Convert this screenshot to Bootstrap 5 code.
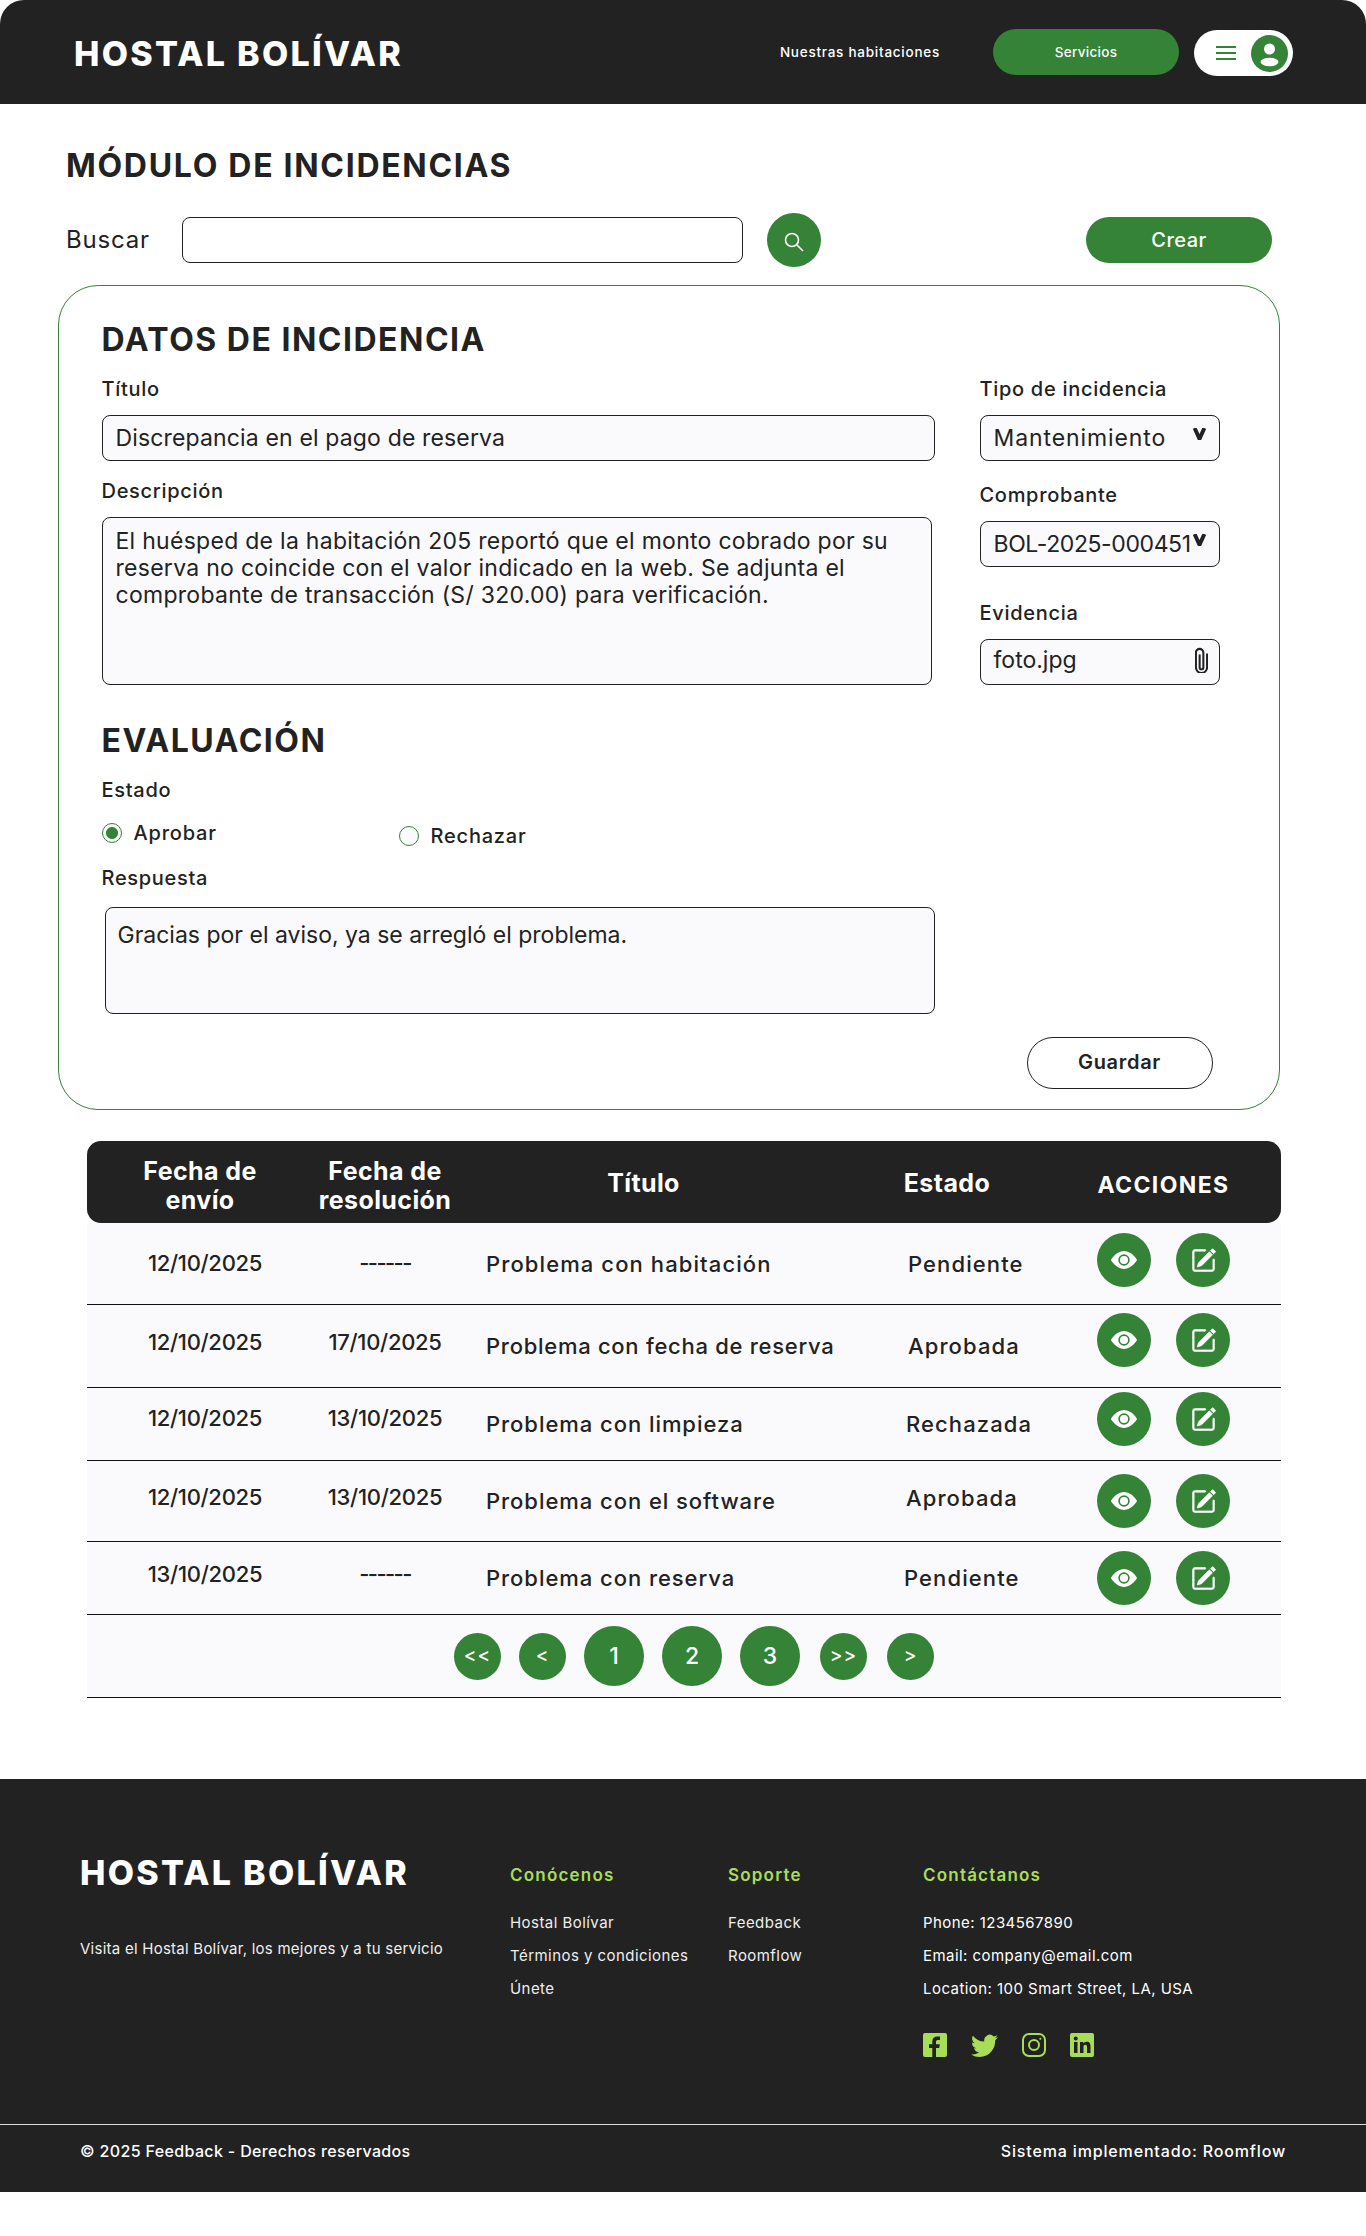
<!DOCTYPE html>
<html lang="es">

<head>
  <meta charset="UTF-8" />
  <meta name="viewport" content="width=device-width, initial-scale=1.0" />
  <title>Módulo de incidencias - Hostal Bolívar</title>
  <link href="https://cdn.jsdelivr.net/npm/bootstrap@5.3.3/dist/css/bootstrap.min.css" rel="stylesheet" />
  <style>
    body {
      font-family: Inter, "Open Sans", sans-serif;
      color: #222;
      background: #fff;
      margin: 0;
    }

    .barra-top {
      height: 104px;
      background: #222;
      border-radius: 24px 24px 0 0;
      padding: 0 73px 0 74px;
      flex-wrap: nowrap;
    }

    .marca {
      font-size: 34px;
      font-weight: 800;
      line-height: 40px;
      color: #fff;
      letter-spacing: 2.3px;
      white-space: nowrap;
    }

    .barra-top .marca {
      margin-top: 4px;
    }

    .enlace-top {
      font-size: 13.5px;
      font-weight: 500;
      letter-spacing: .75px;
      color: #fff;
      text-decoration: none;
      margin-right: 53px;
    }

    .btn-verde {
      background: #348336;
      color: #fff;
      border: 0;
      border-radius: 23px;
      height: 46px;
    }

    .btn-verde:hover {
      background: #2b6f2d;
      color: #fff;
    }

    .btn-servicios {
      width: 186px;
      font-size: 13.5px;
      font-weight: 500;
      letter-spacing: .3px;
      margin-right: 15px;
    }

    .menu-user {
      width: 99px;
      height: 46px;
      background: #fff;
      border-radius: 23px;
      padding: 0 5px 0 22px;
      margin-top: 2px;
    }

    .zona-principal {
      padding: 44px 85px 0 58px;
    }

    .titulo-modulo {
      font-size: 32px;
      font-weight: 700;
      line-height: 36px;
      margin: 0 0 0 8px;
      letter-spacing: 1.7px;
    }

    .fila-buscar {
      margin: 29px 9px 0 8px;
      height: 54px;
    }

    .txt-buscar {
      width: 116px;
      font-size: 24px;
      line-height: 30px;
      letter-spacing: .8px;
    }

    .caja-buscar {
      width: 561px;
      height: 46px;
      border: 1.5px solid #222;
      border-radius: 8px;
    }

    .btn-circulo {
      width: 54px;
      height: 54px;
      padding: 0;
      border-radius: 50%;
      flex: none;
    }

    .btn-buscar {
      margin-left: 24px;
    }

    .btn-crear {
      width: 186px;
      margin-left: auto;
      font-size: 20px;
      font-weight: 500;
      letter-spacing: .5px;
    }

    .panel-datos {
      margin: 18px 0 0;
      width: 1222px;
      height: 825px;
      border: 1.5px solid #348336;
      border-radius: 40px;
      padding: 37px 0 0 42.5px;
    }

    .subtitulo {
      font-size: 32px;
      font-weight: 700;
      line-height: 34px;
      margin: 0;
      letter-spacing: 1.5px;
    }

    .etiqueta {
      display: block;
      font-size: 20px;
      font-weight: 500;
      line-height: 24px;
      letter-spacing: .7px;
      margin: 0 0 14px;
    }

    .col-izq {
      width: 878px;
    }

    .col-der {
      width: 240px;
    }

    .campo {
      height: 46px;
      border: 1.5px solid #222;
      border-radius: 8px;
      background-color: #fafafd;
      font-size: 23px;
      line-height: 27px;
      color: #222;
      padding: 0 0 0 13px;
    }

    .campo:focus {
      border-color: #222;
      box-shadow: none;
      background-color: #fafafd;
    }

    textarea.campo {
      resize: none;
      height: 168px;
      padding: 10px 40px 0 13px;
    }

    .campo-select {
      background-image: url("data:image/svg+xml,%3csvg xmlns='http://www.w3.org/2000/svg' viewBox='0 0 12 11'%3e%3cpath fill='none' stroke='%23222' stroke-width='3.600' d='M1.500 0l4.500 10 4.500-10'/%3e%3c/svg%3e");
      background-repeat: no-repeat;
      background-position: right 13px top 12px;
      background-size: 13px 12px;
      padding-right: 0;
    }

    .sel-tipo { letter-spacing: .9px; }
    .sel-comp { letter-spacing: -.4px; }

    .campo-archivo {
      padding-right: 11px;
      padding-bottom: 4px;
    }

    .evalua {
      margin-top: 39px;
    }

    .fila-radios {
      height: 28px;
      margin: 20px 0 16px;
    }

    .opcion {
      display: flex;
      align-items: center;
      font-size: 20px;
      font-weight: 500;
      line-height: 24px;
      letter-spacing: .8px;
      margin: 0;
      gap: 12px;
    }

    .opcion input {
      appearance: none;
      width: 20px;
      height: 20px;
      margin: 0;
      border: 1.5px solid #348336;
      border-radius: 50%;
      background: #fafafd;
    }

    .opcion input:checked {
      background: radial-gradient(circle, #348336 0 5.5px, #fafafd 6.5px);
    }

    .opcion-a {
      width: 297px;
      margin-top: -6px;
    }

    .resp-box {
      margin-left: 3px;
      width: 830px;
    }

    textarea.campo.resp-box {
      height: 107px;
      padding: 14px 13px 0 12px;
    }

    .btn-guardar {
      display: block;
      width: 186px;
      height: 52px;
      margin: 23px 0 0 925px;
      padding: 0 0 2px;
      background: #fff;
      border: 1.5px solid #222;
      border-radius: 26px;
      color: #222;
      font-size: 20px;
      font-weight: 600;
      letter-spacing: .7px;
    }

    .zona-tabla {
      margin: 31px 0 0 29px;
      width: 1194px;
    }

    .tabla-inc {
      margin: 0;
      table-layout: fixed;
      width: 1194px;
      --bs-table-bg: #fafafd;
      border-collapse: separate;
      border-spacing: 0;
    }

    .tabla-inc th {
      height: 82px;
      background: #222;
      color: #fff;
      font-size: 25px;
      font-weight: 700;
      line-height: 29px;
      letter-spacing: .4px;
      text-align: center;
      vertical-align: middle;
      padding: 3px 0 0;
      border: 0;
      box-shadow: none;
    }

    .tabla-inc th:first-child {
      border-radius: 14px 0 0 14px;
    }

    .tabla-inc th:first-child,
    .tabla-inc th:nth-child(2) {
      padding-top: 8px;
    }

    .tabla-inc th:last-child {
      border-radius: 0 14px 14px 0;
      padding: 6px 18px 0 0;
      font-size: 23px;
      letter-spacing: 1.4px;
    }

    .tabla-inc td {
      font-size: 22px;
      font-weight: 500;
      line-height: 28px;
      color: #222;
      vertical-align: middle;
      padding: 0;
      border-bottom: 1.5px solid #111;
    }

    .tabla-inc td.c-fecha {
      text-align: center;
      letter-spacing: -.3px;
    }

    .tabla-inc td.c-vacia {
      letter-spacing: -1.6px;
    }

    .tabla-inc td.c-fecha:first-child {
      padding-left: 10px;
    }

    .tabla-inc td.c-titulo {
      padding-left: 29px;
      letter-spacing: .95px;
      white-space: nowrap;
    }

    .tabla-inc td.c-estado {
      padding-left: 78px;
      letter-spacing: 1.1px;
    }

    .fila-a td { height: 82px; }
    .fila-b td { height: 83px; }
    .fila-c td { height: 73px; }
    .fila-d td { height: 81px; }
    .fila-e td { height: 73px; }

    .tabla-inc .fila-a .c-titulo { letter-spacing: 1.1px; }
    .tabla-inc .fila-b .c-titulo { letter-spacing: .72px; }

    .fila-a .c-fecha { padding-bottom: 2px; }
    .fila-b .c-fecha { padding-bottom: 9px; }
    .fila-c .c-fecha { padding-bottom: 13px; }
    .fila-d .c-fecha,
    .fila-e .c-fecha { padding-bottom: 8px; }
    .fila-d .c-estado { padding-bottom: 6px; }

    .tabla-inc .fila-c .c-estado,
    .tabla-inc .fila-d .c-estado { padding-left: 76px; }
    .tabla-inc .fila-e .c-estado { padding-left: 74px; }

    .tabla-inc td.c-acc {
      padding-right: 18px;
    }

    .fila-a .c-acc { padding-bottom: 8px; }
    .fila-b .c-acc { padding-bottom: 12px; }
    .fila-c .c-acc { padding-bottom: 10px; }
    .fila-d .c-acc { padding-bottom: 1px; }

    .acc-par {
      gap: 25px;
    }

    .pie-tabla {
      height: 83px;
      background: #fafafd;
      border-bottom: 1.5px solid #111;
      gap: 18px;
      padding-left: 20px;
    }

    .pag-chica,
    .pag-grande {
      flex: none;
      padding: 0;
      border-radius: 50%;
      font-weight: 500;
    }

    .pag-chica {
      width: 47px;
      height: 47px;
      font-size: 19px;
      letter-spacing: 1px;
    }

    .pag-grande {
      width: 60px;
      height: 60px;
      font-size: 23px;
    }

    .pag-fin {
      margin-left: 2px;
    }

    .pie-web {
      margin-top: 81px;
      background: #222;
      color: #fff;
    }

    .pie-cols {
      height: 345px;
      padding: 74px 0 0 80px;
    }

    .pie-marca {
      width: 430px;
    }

    .pie-lema {
      font-size: 15px;
      line-height: 24px;
      letter-spacing: .25px;
      margin: 44px 0 0;
      color: #eee;
    }

    .pie-col-a { width: 218px; }
    .pie-col-b { width: 195px; }

    .pie-tit {
      font-size: 17px;
      font-weight: 600;
      line-height: 24px;
      letter-spacing: 1.2px;
      color: #a8dd57;
      margin: 10px 0 19px;
    }

    .pie-lista {
      list-style: none;
      margin: 0;
      padding: 0;
      font-size: 15px;
      line-height: 33px;
      letter-spacing: .45px;
    }

    .pie-lista a {
      color: #eee;
      text-decoration: none;
    }

    .redes {
      gap: 24px;
      margin-top: 28px;
    }

    .pie-final {
      height: 68px;
      border-top: 1.5px solid #ddd;
      padding: 0 80px 15px;
      font-size: 16px;
      font-weight: 500;
    }

    .copy-izq { letter-spacing: .35px; }
    .copy-der { letter-spacing: .85px; }

    .datos-cols { margin-top: 20px; }
    .col-izq .col-titulo { width: 833px; letter-spacing: .15px; }
    .col-izq .col-desc { width: 830px; letter-spacing: .28px; }
    .datos-et2 { margin-top: 18px; }
    .datos-et3 { margin-top: 22px; }
    .datos-et4 { margin-top: 34px; }
    .estado-et { margin: 20px 0 0; }
    .resp-et { margin-bottom: 17px; }
  </style>
</head>

<body>
  <nav class="navbar barra-top d-flex align-items-center">
    <div class="marca">HOSTAL BOLÍVAR</div>
    <div class="d-flex align-items-center">
      <a href="#" class="enlace-top">Nuestras habitaciones</a>
      <button type="button" class="btn btn-verde btn-servicios">Servicios</button>
      <div class="menu-user d-flex align-items-center justify-content-between">
        <svg width="20" height="14" viewBox="0 0 20 14" fill="#348336">
          <rect width="20" height="2" />
          <rect y="6" width="20" height="2" />
          <rect y="12" width="20" height="2" />
        </svg>
        <svg width="37" height="37" viewBox="0 0 37 37">
          <circle cx="18.5" cy="18.5" r="18.5" fill="#348336" />
          <circle cx="18.5" cy="14" r="5.5" fill="#fff" />
          <ellipse cx="18.5" cy="27" rx="9" ry="4.2" fill="#fff" />
        </svg>
      </div>
    </div>
  </nav>

  <main class="zona-principal">
    <h1 class="titulo-modulo">MÓDULO DE INCIDENCIAS</h1>

    <div class="fila-buscar d-flex align-items-center">
      <span class="txt-buscar">Buscar</span>
      <input type="text" class="caja-buscar form-control" />
      <button type="button" class="btn btn-verde btn-circulo btn-buscar">
        <svg width="20" height="20" viewBox="0 0 20 20" fill="none" stroke="#fff" stroke-width="1.6">
          <circle cx="8" cy="8" r="6.5" />
          <path d="M13 13l6 6" />
        </svg>
      </button>
      <button type="button" class="btn btn-verde btn-crear">Crear</button>
    </div>

    <section class="panel-datos">
      <h2 class="subtitulo">DATOS DE INCIDENCIA</h2>
      <div class="d-flex datos-cols">
        <div class="col-izq">
          <label class="etiqueta">Título</label>
          <input type="text" class="campo form-control col-titulo" value="Discrepancia en el pago de reserva" />
          <label class="etiqueta datos-et2">Descripción</label>
          <textarea class="campo form-control col-desc">El huésped de la habitación 205 reportó que el monto cobrado por su reserva no coincide con el valor indicado en la web. Se adjunta el comprobante de transacción (S/ 320.00) para verificación.</textarea>
        </div>
        <div class="col-der">
          <label class="etiqueta">Tipo de incidencia</label>
          <select class="campo campo-select sel-tipo form-select">
            <option>Mantenimiento</option>
          </select>
          <label class="etiqueta datos-et3">Comprobante</label>
          <select class="campo campo-select sel-comp form-select">
            <option>BOL-2025-000451</option>
          </select>
          <label class="etiqueta datos-et4">Evidencia</label>
          <div class="campo campo-archivo d-flex align-items-center justify-content-between">
            <span>foto.jpg</span>
            <svg width="13" height="26" viewBox="0 0 14 26" fill="none" stroke="#222" stroke-width="2.200">
              <path d="M5 7v14a2 2 0 0 0 4 0V5a4 4 0 0 0-8 0v16a6 6 0 0 0 12 0V6" />
            </svg>
          </div>
        </div>
      </div>

      <div class="evalua">
        <h2 class="subtitulo">EVALUACIÓN</h2>
        <label class="etiqueta estado-et">Estado</label>
        <div class="fila-radios d-flex align-items-center">
          <label class="opcion opcion-a"><input type="radio" name="estado" checked />Aprobar</label>
          <label class="opcion"><input type="radio" name="estado" />Rechazar</label>
        </div>
        <label class="etiqueta resp-et">Respuesta</label>
        <textarea class="campo resp-box form-control">Gracias por el aviso, ya se arregló el problema.</textarea>
        <button type="button" class="btn btn-guardar">Guardar</button>
      </div>
    </section>

    <section class="zona-tabla">
      <table class="table tabla-inc">
        <colgroup>
          <col style="width:226px" />
          <col style="width:144px" />
          <col style="width:373px" />
          <col style="width:234px" />
          <col style="width:217px" />
        </colgroup>
        <thead>
          <tr>
            <th>Fecha de<br />envío</th>
            <th>Fecha de<br />resolución</th>
            <th>Título</th>
            <th>Estado</th>
            <th>ACCIONES</th>
          </tr>
        </thead>
        <tbody id="filasTabla"></tbody>
      </table>
      <div class="pie-tabla d-flex align-items-center justify-content-center">
        <button type="button" class="btn btn-verde pag-chica">&lt;&lt;</button>
        <button type="button" class="btn btn-verde pag-chica">&lt;</button>
        <button type="button" class="btn btn-verde pag-grande">1</button>
        <button type="button" class="btn btn-verde pag-grande">2</button>
        <button type="button" class="btn btn-verde pag-grande">3</button>
        <button type="button" class="btn btn-verde pag-chica pag-fin">&gt;&gt;</button>
        <button type="button" class="btn btn-verde pag-chica pag-fin">&gt;</button>
      </div>
    </section>
  </main>

  <footer class="pie-web">
    <div class="pie-cols d-flex">
      <div class="pie-marca">
        <div class="marca">HOSTAL BOLÍVAR</div>
        <p class="pie-lema">Visita el Hostal Bolívar, los mejores y a tu servicio</p>
      </div>
      <div class="pie-col-a">
        <h3 class="pie-tit">Conócenos</h3>
        <ul class="pie-lista">
          <li><a href="#">Hostal Bolívar</a></li>
          <li><a href="#">Términos y condiciones</a></li>
          <li><a href="#">Únete</a></li>
        </ul>
      </div>
      <div class="pie-col-b">
        <h3 class="pie-tit">Soporte</h3>
        <ul class="pie-lista">
          <li><a href="#">Feedback</a></li>
          <li><a href="#">Roomflow</a></li>
        </ul>
      </div>
      <div>
        <h3 class="pie-tit">Contáctanos</h3>
        <ul class="pie-lista">
          <li>Phone: 1234567890</li>
          <li>Email: company@email.com</li>
          <li>Location: 100 Smart Street, LA, USA</li>
        </ul>
        <div class="redes d-flex">
          <svg width="24" height="24" viewBox="0 0 24 24">
            <rect width="24" height="24" rx="2" fill="#a8dd57" />
            <path fill="#222" d="M13 24V15h3.200l.6-3.800H13V9c0-1.200.5-2 2-2h2V3.600C16.400 3.500 15.300 3.400 14.300 3.400c-3 0-5 1.800-5 5v2.800H6V15h3.300v9z" />
          </svg>
          <svg width="27" height="24" viewBox="0 1 16 14" preserveAspectRatio="none" fill="#a8dd57">
            <path d="M5.026 15c6.038 0 9.341-5.003 9.341-9.334q.002-.211-.006-.422A6.700 6.700 0 0 0 16 3.542a6.700 6.700 0 0 1-1.889.518 3.300 3.300 0 0 0 1.447-1.817 6.500 6.500 0 0 1-2.087.793A3.286 3.286 0 0 0 7.875 6.030a9.320 9.320 0 0 1-6.767-3.429 3.290 3.290 0 0 0 1.018 4.382A3.300 3.300 0 0 1 .64 6.575v.045a3.290 3.290 0 0 0 2.632 3.218 3.200 3.200 0 0 1-.865.115 3 3 0 0 1-.614-.057 3.280 3.280 0 0 0 3.067 2.277A6.600 6.600 0 0 1 .78 13.580a6 6 0 0 1-.78-.045A9.340 9.340 0 0 0 5.026 15" />
          </svg>
          <svg width="24" height="24" viewBox="0 0 24 24" fill="none" stroke="#a8dd57" stroke-width="2">
            <rect x="1" y="1" width="22" height="22" rx="6" />
            <circle cx="12" cy="12" r="5" />
            <circle cx="18.300" cy="5.700" r="1" fill="#a8dd57" stroke="none" />
          </svg>
          <svg width="24" height="24" viewBox="0 0 24 24">
            <rect width="24" height="24" rx="2" fill="#a8dd57" />
            <rect x="4" y="9" width="3.500" height="11" fill="#222" />
            <circle cx="5.750" cy="5.600" r="2" fill="#222" />
            <path fill="#222" d="M10 9h3.300v1.600c.6-1 1.800-1.900 3.500-1.900 3 0 3.700 2 3.700 4.800V20H17v-5.700c0-1.400-.3-2.600-1.800-2.600s-1.700 1.200-1.700 2.500V20H10z" />
          </svg>
        </div>
      </div>
    </div>
    <div class="pie-final d-flex align-items-center justify-content-between">
      <span class="copy-izq">© 2025 Feedback - Derechos reservados</span>
      <span class="copy-der">Sistema implementado: Roomflow</span>
    </div>
  </footer>

  <script src="https://cdn.jsdelivr.net/npm/bootstrap@5.3.3/dist/js/bootstrap.bundle.min.js"></script>
  <script>
    const incidencias = [
      ["a", "12/10/2025", "------", "Problema con habitación", "Pendiente"],
      ["b", "12/10/2025", "17/10/2025", "Problema con fecha de reserva", "Aprobada"],
      ["c", "12/10/2025", "13/10/2025", "Problema con limpieza", "Rechazada"],
      ["d", "12/10/2025", "13/10/2025", "Problema con el software", "Aprobada"],
      ["e", "13/10/2025", "------", "Problema con reserva", "Pendiente"],
    ];

    const iconoOjo = `<svg width="26" height="26" viewBox="0 0 16 16" fill="#fff"><path d="M10.5 8a2.5 2.5 0 1 1-5 0 2.5 2.5 0 0 1 5 0"/><path d="M0 8s3-5.5 8-5.5S16 8 16 8s-3 5.5-8 5.5S0 8 0 8m8 3.500a3.500 3.500 0 1 0 0-7 3.500 3.500 0 0 0 0 7"/></svg>`;
    const iconoEditar = `<svg width="25" height="25" viewBox="0 0 16 16" fill="#fff" stroke="#fff" stroke-width=".4"><path d="M15.502 1.940a.5.5 0 0 1 0 .706L14.459 3.690l-2-2L13.502.646a.5.5 0 0 1 .707 0l1.293 1.293zm-1.750 2.456-2-2L4.939 9.210a.5.5 0 0 0-.121.196l-.805 2.414a.25.25 0 0 0 .316.316l2.414-.805a.5.5 0 0 0 .196-.12l6.813-6.814z"/><path fill-rule="evenodd" d="M1 13.500A1.500 1.500 0 0 0 2.500 15h11a1.500 1.500 0 0 0 1.500-1.500v-6a.5.5 0 0 0-1 0v6a.5.5 0 0 1-.5.5h-11a.5.5 0 0 1-.5-.5v-11a.5.5 0 0 1 .5-.5H9a.5.5 0 0 0 0-1H2.500A1.500 1.500 0 0 0 1 2.500z"/></svg>`;

    document.getElementById("filasTabla").innerHTML = incidencias.map((f) => `
      <tr class="fila-${f[0]}">
        <td class="c-fecha">${f[1]}</td>
        <td class="c-fecha ${f[2] === "------" ? "c-vacia" : ""}">${f[2]}</td>
        <td class="c-titulo">${f[3]}</td>
        <td class="c-estado">${f[4]}</td>
        <td class="c-acc">
          <div class="acc-par d-flex justify-content-center">
            <button type="button" class="btn btn-verde btn-circulo">${iconoOjo}</button>
            <button type="button" class="btn btn-verde btn-circulo">${iconoEditar}</button>
          </div>
        </td>
      </tr>`).join("");
  </script>
</body>
</html>
